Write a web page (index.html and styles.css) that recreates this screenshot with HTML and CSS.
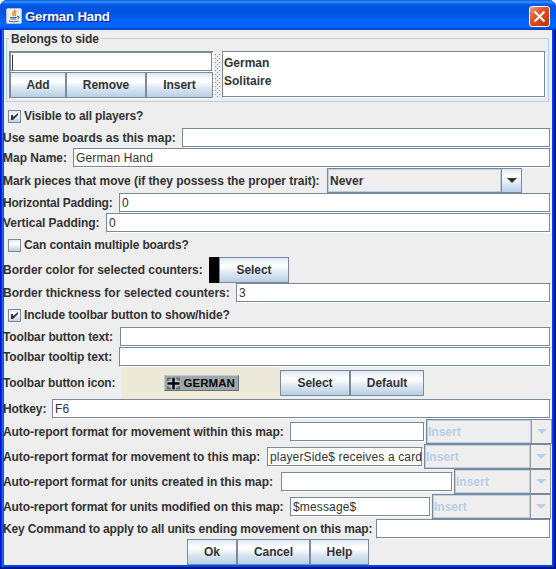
FILE: index.html
```html
<!DOCTYPE html>
<html lang="en">
<head>
<meta charset="utf-8">
<title>German Hand</title>
<link rel="stylesheet" href="styles.css">
</head>
<body>
<div class="window">
  <header class="titlebar">
    <svg class="java" viewBox="0 0 16 16"><rect x=".5" y=".5" width="15" height="15" rx="1.5" fill="#e9edf0" stroke="#b5bdc8"/><path d="M8.800 1.500c1 2-3.200 3-2 5 .3.700.8 1 .8 1.600M10.500 3.500c-2 1-2.500 2-1.200 3.200.4.500-.2 1.200-.6 1.500" fill="none" stroke="#ee8a2a" stroke-width="1.400"/><path d="M4 9.500h6.500M4.500 11h5.500M11 8.500c2.500-.5 2.500 1.500.5 2M3 13c2 1 7 1 9.500 0" fill="none" stroke="#4d6d90" stroke-width="1.100"/></svg>
    <h1>German Hand</h1>
    <button class="close" aria-label="Close"><svg viewBox="0 0 21 21"><path d="M5 5l11 11M16 5l-11 11" stroke="#fff" stroke-width="2.400"/></svg></button>
  </header>
  <main class="form">
    <fieldset class="sides">
      <legend>Belongs to side</legend>
      <div class="split">
        <div class="editor">
          <div class="field caret"></div>
          <div class="buttons"><button class="btn w-add">Add</button><button class="btn w-remove">Remove</button><button class="btn w-insert">Insert</button></div>
        </div>
        <svg class="divider" width="8" height="45"><defs><pattern id="grip" width="4" height="4" patternUnits="userSpaceOnUse"><path d="M1 1h1v1h-1zM3 3h1v1h-1z" fill="#8c8c8c"/></pattern></defs><rect x="1" width="6" height="44" fill="url(#grip)"/></svg>
        <div class="list"><div>German</div><div>Solitaire</div></div>
      </div>
    </fieldset>
    <div class="row check first"><span class="box"><svg viewBox="0 0 13 13"><path d="M3 5h2v2l5-4v2l-5 5h-2z"/></svg></span><span class="t-visible">Visible to all players?</span></div>
    <div class="row"><label class="l-boards">Use same boards as this map:</label><div class="field"></div></div>
    <div class="row"><label class="l-name">Map Name:</label><div class="field">German Hand</div></div>
    <div class="row tall"><label class="l-mark">Mark pieces that move (if they possess the proper trait):</label><div class="combo never"><span>Never</span><i></i></div></div>
    <div class="row"><label class="l-hpad">Horizontal Padding:</label><div class="field">0</div></div>
    <div class="row"><label class="l-vpad">Vertical Padding:</label><div class="field">0</div></div>
    <div class="row check"><span class="box"></span><span class="t-multi">Can contain multiple boards?</span></div>
    <div class="row btnrow"><label class="l-color">Border color for selected counters:</label><span class="swatch"></span><button class="btn w-select">Select</button></div>
    <div class="row"><label class="l-thick">Border thickness for selected counters:</label><div class="field">3</div></div>
    <div class="row check"><span class="box"><svg viewBox="0 0 13 13"><path d="M3 5h2v2l5-4v2l-5 5h-2z"/></svg></span><span class="t-include">Include toolbar button to show/hide?</span></div>
    <div class="row"><label class="l-text">Toolbar button text:</label><div class="field"></div></div>
    <div class="row"><label class="l-tip">Toolbar tooltip text:</label><div class="field"></div></div>
    <div class="row iconrow"><label class="l-icon">Toolbar button icon:</label>
      <div class="preview"><div class="badge"><svg viewBox="0 0 15 14"><path d="M1 5V1h4M10 1h4v4M14 9v4h-4M5 13H1V9" fill="none" stroke="#555e62" stroke-width="1.500"/><path d="M7.500 0v14M0 7h15" stroke="#c9d1d4" stroke-width="5"/><path d="M7.500 .5v13M.5 7h14" stroke="#080808" stroke-width="3"/></svg><span>GERMAN</span></div></div>
      <button class="btn w-select">Select</button><button class="btn w-default">Default</button></div>
    <div class="row"><label class="l-hot">Hotkey:</label><div class="field">F6</div></div>
    <div class="row tall wide"><label class="l-within">Auto-report format for movement within this map:</label><div class="field"></div><div class="combo off c1"><span>Insert</span><i></i></div></div>
    <div class="row tall"><label class="l-to">Auto-report format for movement to this map:</label><div class="field receives">playerSide$ receives a card</div><div class="combo off c2"><span>Insert</span><i></i></div></div>
    <div class="row tall"><label class="l-created">Auto-report format for units created in this map:</label><div class="field"></div><div class="combo off c3"><span>Insert</span><i></i></div></div>
    <div class="row tall"><label class="l-modified">Auto-report format for units modified on this map:</label><div class="field">$message$</div><div class="combo off c4"><span>Insert</span><i></i></div></div>
    <div class="row"><label class="l-key">Key Command to apply to all units ending movement on this map:</label><div class="field"></div></div>
    <footer class="actions"><button class="btn w-ok">Ok</button><button class="btn w-cancel">Cancel</button><button class="btn w-help">Help</button></footer>
  </main>
</div>
</body>
</html>
```

FILE: styles.css
```css
* { box-sizing: border-box; }
body { margin: 0; background: #fff; font: bold 12px/14px "Liberation Sans", Arial, sans-serif; color: #333; }
.window {
  width: 556px; height: 569px; overflow: hidden;
  border-radius: 7px 7px 0 0;
  background: linear-gradient(90deg, #0010cf 0 1px, #0831d9 1px 2px, #166aee 2px 3px, #0855dd 3px 4px, #0046e8 4px 553px, #0034dc 553px 554px, #001590 554px);
  display: flex; flex-direction: column;
  box-shadow: inset 0 -2px 0 #00138c;
}
.titlebar {
  height: 30px; flex: none; display: flex; align-items: center; padding: 3px 6px 0 6px;
  background: linear-gradient(#0a5be0 0, #3a94ff 2px, #0560ee 4px, #0253df 7px, #0054e4 14px, #0062fa 20px, #0066ff 26px, #0054e0 28px, #003dd0 30px);
}
.java { width: 16px; height: 16px; margin-top: -1px; }
h1 { margin: 0 auto 0 3px; font: bold 13.300px/16px "Liberation Sans", Arial, sans-serif; color: #fff; text-shadow: 1px 1px #0a1883; letter-spacing: -.22px; }
.close { width: 21px; height: 21px; padding: 0; border: 1px solid #fff; border-radius: 3px; background: linear-gradient(135deg, #ee9a80, #e2512a 40%, #d43b0c 75%, #b93208); }
.close svg { display: block; width: 19px; height: 19px; }
.form { flex: none; width: 548px; height: 535px; margin-left: 4px; background: #eee; padding-top: 1px; }
.sides { position: relative; margin: 7px 3px 0 2px; height: 64px; border: 1px solid #b8cfe5; padding: 12px 0 0 2px; min-width: 0; }
.sides legend { position: absolute; top: -7px; left: 2px; padding: 0 2px; background: #eee; line-height: 15px; letter-spacing: -.1px; }
.split { display: flex; height: 48px; }
.editor { width: 205px; border: 1px solid #7a8a99; border-right-color: #fff; border-bottom-color: #fff; }
.buttons { display: flex; height: 26px; }
.divider { display: block; flex: none; margin-top: 2px; }
.list { width: 324px; height: 47px; border: 1px solid #7a8a99; border-right-color: #fff; border-bottom-color: #fff; box-shadow: inset -1px -1px #7a8a99; background: #fff; padding: 2px 1px; line-height: 18px; letter-spacing: 0; }
.row { display: flex; align-items: center; height: 20px; padding-right: 1px; }
.row.tall { height: 25px; }
.row.wide { padding-right: 0; }
.row.check { height: 24px; padding-left: 4px; }
.row.first { margin-top: 2px; }
.row.btnrow { height: 26px; }
.row.iconrow { height: 32px; }
.row label { flex: none; white-space: nowrap; margin-left: -1px; }
.box { width: 13px; height: 13px; margin-right: 3px; border: 1px solid #7a8a99; background: linear-gradient(#dde8f3, #fff 35%, #b8cfe5); }
.box svg { display: block; width: 13px; height: 13px; margin: -1px; fill: #333; }
.check span:last-child { letter-spacing: -.14px; }
.field { flex: 1; min-width: 0; height: 20px; overflow: hidden; white-space: nowrap; border: 1px solid #7a8a99; border-right-color: #fff; border-bottom-color: #fff; box-shadow: inset -1px -1px #7a8a99; background: #fff; padding: 2px; font-weight: normal; letter-spacing: .15px; line-height: 15px; }
.field.caret { position: relative; width: 203px; }
.caret::before { content: ""; position: absolute; left: 1px; top: 2px; width: 1px; height: 15px; background: #333; }
.btn { flex: none; height: 26px; margin: 0; padding: 0; border: 1px solid #7a8a99; background: linear-gradient(#dde8f3, #fff 30%, #fff 36%, #dce7f2 62%, #b8cfe5); font: inherit; color: #333; letter-spacing: -.05px; }
.w-add { width: 56px; } .w-remove { width: 80px; } .w-insert { width: 67px; }
.w-select { width: 70px; } .w-default { width: 74px; }
.w-ok { width: 50px; } .w-cancel { width: 73px; } .w-help { width: 59px; }
.swatch { width: 10px; height: 26px; background: #000; }
.preview { width: 158px; height: 32px; background: #ece9d8; display: flex; align-items: center; justify-content: center; }
.badge { width: 75px; height: 16px; display: flex; align-items: center; padding-left: 2px; gap: 4px; border: 1px solid; border-color: #bfc8cb #667075 #667075 #bfc8cb; background: #9da7ac; color: #080808; font-size: 11.500px; letter-spacing: .05px; }
.badge svg { width: 13px; height: 13px; flex: none; }
.combo { flex: none; display: flex; height: 25px; border: 1px solid #7a8a99; }
.combo span { flex: 1; border: 1px solid #b8cfe5; line-height: 22px; padding-left: 1px; }
.combo i { width: 20px; border-left: 1px solid #7a8a99; display: flex; align-items: center; justify-content: center; background: linear-gradient(#dde8f3, #fff 30%, #b8cfe5); }
.combo i::before { content: ""; border: 5px solid transparent; border-top-color: #333; border-bottom: 0; }
.never { width: 195px; }
.off { margin-left: 1px; color: #b8cfe5; border-right-color: #999; }
.off span { padding-left: 0; }
.off i { background: #eee; border-color: #999; }
.off i::before { border-top-color: #b8cfe5; }
.c1 { width: 126px; } .c2 { width: 127px; } .c3 { width: 97px; } .c4 { width: 119px; }
.l-boards { width: 179px; }
.l-name { width: 70px; }
.l-mark { width: 324px; letter-spacing: -.05px; }
.l-hpad { width: 116px; letter-spacing: -.2px; }
.l-vpad { width: 103px; letter-spacing: -.05px; }
.l-color { width: 206px; letter-spacing: -.03px; }
.l-thick { width: 233px; }
.l-text { width: 117px; letter-spacing: -.13px; }
.l-tip { width: 116px; letter-spacing: -.13px; }
.l-icon { width: 119px; letter-spacing: -.17px; }
.l-hot { width: 49px; letter-spacing: -.1px; }
.l-within { width: 287px; letter-spacing: -.07px; }
.l-to { width: 264px; letter-spacing: -.08px; }
.l-created { width: 278px; letter-spacing: -.1px; }
.l-modified { width: 287px; letter-spacing: -.11px; }
.l-key { width: 373px; letter-spacing: -.13px; }
.actions { display: flex; padding-left: 183px; }
```
